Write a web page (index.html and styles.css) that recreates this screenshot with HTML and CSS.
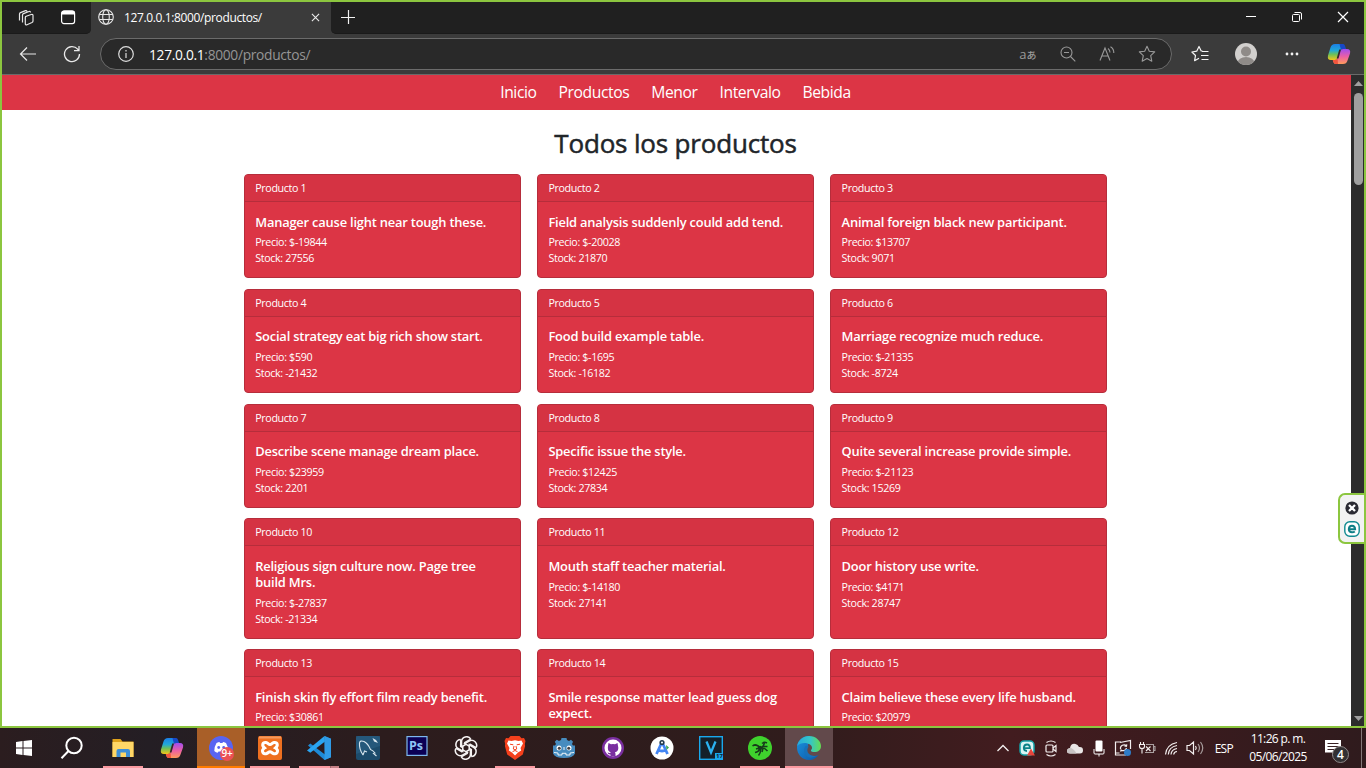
FILE: index.html
```html
<!DOCTYPE html>
<html lang="es">
<head>
<meta charset="utf-8">
<title>127.0.0.1:8000/productos/</title>
<link rel="stylesheet" href="styles.css">
</head>
<body>
<svg class="defs" width="0" height="0" aria-hidden="true">
  <defs>
    <linearGradient id="cpA" x1="0" y1="0" x2="0" y2="1"><stop offset="0" stop-color="#1b7fe8"/><stop offset=".4" stop-color="#21a8d8"/><stop offset=".65" stop-color="#6cbf5a"/><stop offset="1" stop-color="#f5c518"/></linearGradient>
    <linearGradient id="cpB" x1="0" y1="0" x2="0" y2="1"><stop offset="0" stop-color="#a04df0"/><stop offset=".5" stop-color="#ea5fa5"/><stop offset="1" stop-color="#ff9a5a"/></linearGradient>
    <symbol id="copilot" viewBox="0 0 24 24">
      <path d="M8 2h7q1.500 0 2 1.700L18.500 7H16q-2 0-2.600 2L11 15.500q-.7 2.500-3 2.500H4Q0 18 1 13.500L3.500 5.500Q4.500 2 8 2z" fill="url(#cpA)"/>
      <path d="M12.500 2h3.500q1.500 0 2 1.700L19 7h-3q-1.500 0-2 1z" fill="#1748c7"/>
      <path d="M16 22H8.500Q7 22 6.500 20.300L5.800 18H8q2 0 2.700-2L13 9.500q.7-2.500 3-2.500h4q4 0 3 4.500l-2.500 7Q19.500 22 16 22z" fill="url(#cpB)"/>
      <path d="M11 22H8.500Q7 22 6.500 20.300L5.800 18H8q2 0 2.600-1.500z" fill="#f2553d"/>
      <path d="M14 7.500h-1.800L9.700 16.500h1.800z" fill="#33262a"/>
    </symbol>
    <linearGradient id="edA" x1="0" y1="0" x2="1" y2="0"><stop offset="0" stop-color="#26a9dc"/><stop offset=".55" stop-color="#35c6c8"/><stop offset="1" stop-color="#65dc50"/></linearGradient>
    <linearGradient id="edB" x1="0" y1="0" x2="1" y2="1"><stop offset="0" stop-color="#1b93df"/><stop offset="1" stop-color="#0c58a8"/></linearGradient>
  </defs>
</svg>

<div class="window">
  <header class="tabbar">
    <div class="tab-tools">
      <svg class="ic18" viewBox="0 0 18 18" fill="none" stroke="#e6e6e6" stroke-width="1.2" stroke-linejoin="round"><path d="M8.500 7.500l5.700-2q1.800-.5 1.800 1v5.500q0 1-1 1.500l-5 2.200q-1.700.6-1.700-1V8.500q0-.8.700-1z"/><path d="M5.500 13.500V6q0-1 1-1.400l5.500-2.100q1.300-.4 1.500 1M2.500 11.500V5q0-1 1-1.400l5-2q1.300-.4 1.500 1"/></svg>
      <svg class="ic18" viewBox="0 0 18 18"><rect x="2.600" y="2.100" width="13" height="12.500" rx="2.300" fill="none" stroke="#fff" stroke-width="1.200"/><path d="M2.500 5.500V4.500q0-3 3-3h7.500q3 0 3 3v1z" fill="#fff"/></svg>
    </div>
    <div class="tab">
      <svg class="ic16" viewBox="0 0 16 16" fill="none" stroke="#e8e8e8" stroke-width="1.100"><circle cx="8" cy="8" r="7.300"/><ellipse cx="8" cy="8" rx="3.300" ry="7.300"/><path d="M1.200 5.500h13.600M1.200 10.500h13.600"/></svg>
      <span class="tab-title">127.0.0.1:8000/productos/</span>
      <svg class="tab-x" viewBox="0 0 10 10" stroke="#eee" stroke-width="1.200"><path d="M1 1l8 8M9 1l-8 8"/></svg>
    </div>
    <div class="tab-rest">
      <svg class="plus" viewBox="0 0 14 14" stroke="#f2f2f2" stroke-width="1.200"><path d="M7.500 0v14M0 7.500h14"/></svg>
      <div class="win-controls">
        <svg viewBox="0 0 12 12" stroke="#fff"><path d="M1 5.500h10"/></svg>
        <svg viewBox="0 0 12 12" fill="none" stroke="#fff"><rect x="1.500" y="3.500" width="7" height="7" rx="1"/><path d="M3.500 1.500h5.500q1.500 0 1.500 1.500v5.500"/></svg>
        <svg viewBox="0 0 12 12" stroke="#fff" stroke-width="1.200"><path d="M1 1l10 10M11 1L1 11"/></svg>
      </div>
    </div>
  </header>

  <div class="toolbar">
    <svg class="ic18 back" viewBox="0 0 18 18" fill="none" stroke="#e8e8e8" stroke-width="1.200"><path d="M17 9H1.500M8 2.500L1.500 9 8 15.500"/></svg>
    <svg class="ic18 reload" viewBox="0 0 18 18" fill="none" stroke="#e8e8e8" stroke-width="1.300"><path d="M16.500 9A7.500 7.500 0 1 1 14.700 4.200L16 5.500M16 1v4.700h-5"/></svg>
    <div class="address">
      <svg class="ic16" viewBox="0 0 16 16" fill="none" stroke="#ddd" stroke-width="1.200"><circle cx="8" cy="8" r="7.300"/><path d="M8 7v5M8 4v1.500"/></svg>
      <span class="url"><b>127.0.0.1</b>:8000/productos/</span>
      <div class="address-icons">
        <span class="translate">a<i>あ</i></span>
        <svg class="ic16" viewBox="0 0 16 16" fill="none" stroke="#999" stroke-width="1.100"><circle cx="6.500" cy="6.500" r="5.500"/><path d="M4 6.500h5M10.500 10.500l4.800 4.800"/></svg>
        <svg class="ic16" viewBox="0 0 16 16" fill="none" stroke="#999" stroke-width="1.100"><path d="M1 14.500L6 2l5 12.500M2.700 10h6.600M9 2.500q2 1.500 2 4M11.500.8q3.500 2.200 3.300 6.200"/></svg>
        <svg class="ic18" viewBox="0 0 18 18" fill="none" stroke="#999" stroke-width="1.100" stroke-linejoin="round"><path d="M9 1.300l2.300 5 5.400.6-4 3.700 1.100 5.600L9 13.500l-4.800 2.700 1.100-5.600-4-3.700 5.400-.6z"/></svg>
      </div>
    </div>
    <div class="right-icons">
      <svg class="ic18" viewBox="0 0 18 18" fill="none" stroke="#f5f5f5" stroke-width="1.200" stroke-linejoin="round"><path d="M11.500 6L10.200 6 8 1.500 5.700 6.200.9 7l3.600 3.500-.9 5.200L8 13.300"/><path d="M11 6.500h6.500M10 10.500h7.500M10.500 14.500h7"/></svg>
      <svg class="avatar" viewBox="0 0 22 22"><defs><clipPath id="avc"><circle cx="11" cy="11" r="11"/></clipPath></defs><circle cx="11" cy="11" r="11" fill="#d2d0ce"/><circle cx="11" cy="8.500" r="5" fill="#8f8b88"/><ellipse cx="11" cy="20" rx="8.500" ry="6" fill="#8f8b88" clip-path="url(#avc)"/></svg>
      <svg class="dots" viewBox="0 0 14 4" fill="#f2f2f2"><circle cx="2" cy="2" r="1.400"/><circle cx="7" cy="2" r="1.400"/><circle cx="12" cy="2" r="1.400"/></svg>
      <svg class="cp24"><use href="#copilot"/></svg>
    </div>
  </div>

  <div class="viewport">
    <main class="page">
      <nav class="nav"><a>Inicio</a><a>Productos</a><a>Menor</a><a>Intervalo</a><a>Bebida</a></nav>
      <h1 class="heading">Todos los productos</h1>
      <section class="grid">
        <article class="card"><div class="card-header">Producto 1</div><div class="card-body"><h5>Manager cause light near tough these.</h5><p>Precio: $-19844<br>Stock: 27556</p></div></article>
        <article class="card"><div class="card-header">Producto 2</div><div class="card-body"><h5>Field analysis suddenly could add tend.</h5><p>Precio: $-20028<br>Stock: 21870</p></div></article>
        <article class="card"><div class="card-header">Producto 3</div><div class="card-body"><h5>Animal foreign black new participant.</h5><p>Precio: $13707<br>Stock: 9071</p></div></article>
        <article class="card"><div class="card-header">Producto 4</div><div class="card-body"><h5>Social strategy eat big rich show start.</h5><p>Precio: $590<br>Stock: -21432</p></div></article>
        <article class="card"><div class="card-header">Producto 5</div><div class="card-body"><h5>Food build example table.</h5><p>Precio: $-1695<br>Stock: -16182</p></div></article>
        <article class="card"><div class="card-header">Producto 6</div><div class="card-body"><h5>Marriage recognize much reduce.</h5><p>Precio: $-21335<br>Stock: -8724</p></div></article>
        <article class="card"><div class="card-header">Producto 7</div><div class="card-body"><h5>Describe scene manage dream place.</h5><p>Precio: $23959<br>Stock: 2201</p></div></article>
        <article class="card"><div class="card-header">Producto 8</div><div class="card-body"><h5>Specific issue the style.</h5><p>Precio: $12425<br>Stock: 27834</p></div></article>
        <article class="card"><div class="card-header">Producto 9</div><div class="card-body"><h5>Quite several increase provide simple.</h5><p>Precio: $-21123<br>Stock: 15269</p></div></article>
        <article class="card"><div class="card-header">Producto 10</div><div class="card-body"><h5>Religious sign culture now. Page tree<br>build Mrs.</h5><p>Precio: $-27837<br>Stock: -21334</p></div></article>
        <article class="card"><div class="card-header">Producto 11</div><div class="card-body"><h5>Mouth staff teacher material.</h5><p>Precio: $-14180<br>Stock: 27141</p></div></article>
        <article class="card"><div class="card-header">Producto 12</div><div class="card-body"><h5>Door history use write.</h5><p>Precio: $4171<br>Stock: 28747</p></div></article>
        <article class="card"><div class="card-header">Producto 13</div><div class="card-body"><h5>Finish skin fly effort film ready benefit.</h5><p>Precio: $30861</p></div></article>
        <article class="card"><div class="card-header">Producto 14</div><div class="card-body"><h5>Smile response matter lead guess dog<br>expect.</h5></div></article>
        <article class="card"><div class="card-header">Producto 15</div><div class="card-body"><h5>Claim believe these every life husband.</h5><p>Precio: $20979</p></div></article>
      </section>
    </main>
    <div class="scrollbar">
      <svg class="arrow" viewBox="0 0 9 5"><path d="M0 5L4.500 0 9 5z" fill="#9f9f9f"/></svg>
      <div class="thumb"></div>
      <svg class="arrow down" viewBox="0 0 9 5"><path d="M0 0l4.500 5L9 0z" fill="#9f9f9f"/></svg>
    </div>
  </div>

  <div class="widget">
    <svg viewBox="0 0 14 14"><circle cx="7" cy="7" r="6.600" fill="#2b2b33"/><path d="M4 4l6 6M10 4l-6 6" stroke="#fff" stroke-width="2.300"/></svg>
    <svg class="eset" viewBox="0 0 16 16"><rect x=".8" y=".8" width="14.400" height="14.400" rx="5" fill="#fff" stroke="#0f8a90" stroke-width="1.400"/><path d="M4.800 8.300h6.300Q11 4.700 8 4.700T4.800 8.200Q5 11.300 8 11.300q1.900 0 2.800-.8" fill="none" stroke="#0f7f86" stroke-width="2"/></svg>
  </div>
</div>

<footer class="taskbar">
  <div class="apps">
    <div class="app start"><svg viewBox="0 0 24 24" fill="#fff"><path d="M4 6l6.500-.9v6.400H4zM11.500 5L20 4v7.500h-8.500zM4 12.500h6.500v6.400L4 18zM11.500 12.500H20V20l-8.500-1z"/></svg></div>
    <div class="app search"><svg viewBox="0 0 24 24" fill="none" stroke="#fff" stroke-width="2"><circle cx="14" cy="9.500" r="7.700"/><path d="M8.500 15L1.500 22.300"/></svg></div>
    <div class="app open"><svg viewBox="0 0 24 24"><path d="M1.500 3h8l2 2.500h11V21h-21z" fill="#dfa21b"/><path d="M1.500 6h21v15h-21z" fill="#ffd767"/><path d="M5.500 21v-6q0-2 2-2h9.500q2 0 2 2v6h-4v-4.500H9.500V21z" fill="#3d8fd8"/></svg></div>
    <div class="app"><svg><use href="#copilot"/></svg></div>
    <div class="app alert"><svg viewBox="0 0 24 24"><circle cx="12" cy="12" r="12" fill="#5865f2"/><path d="M7.500 7q2-1 3-1l.5 1h2.500l.5-1q1 0 3 1 2.200 3.500 2.200 8-1.700 1.500-3.300 1.700l-.8-1.300H9.500l-.8 1.300Q7 16.500 5.300 15 5.300 10.500 7.500 7z" fill="#fff"/><circle cx="9.700" cy="11.500" r="1.400" fill="#5865f2"/><circle cx="14.700" cy="11.500" r="1.400" fill="#5865f2"/></svg><span class="badge">9+</span></div>
    <div class="app open"><svg viewBox="0 0 24 24"><rect width="24" height="24" rx="2" fill="#ee7020"/><path d="M1 1.500h22" stroke="#f49a5e" stroke-width="2"/><path d="M8 6.500c-3.500-.5-4.500 3-1.500 5.500-3.500 2-2 6.500 1.500 5.700 2.200-.4 2.500-2 4-2s1.800 1.600 4 2c3.500.8 5-3.700 1.500-5.700 3-2.500 2-6-1.500-5.500-2 .3-2.300 2-4 2s-2-1.700-4-2z" fill="none" stroke="#fff" stroke-width="3"/></svg></div>
    <div class="app open split"><svg viewBox="0 0 24 24"><path d="M17.500 0L24 2.800v18.400L17.500 24 1 9.500l2.300-2L18 18.500z" fill="#1e8ad6"/><path d="M17.500 0L18 5.500 3.300 16.700 0 14.500z" fill="#2aa5f2"/><path d="M17.500 0L24 2.800v18.400L17.500 24z" fill="#2f9be6"/></svg></div>
    <div class="app"><svg viewBox="0 0 24 24"><rect width="24" height="24" rx="2" fill="#1c4b6b"/><path d="M0 0h24v10L0 18z" fill="#2b6185" opacity=".6"/><path d="M7 19q-4-6-3.500-12Q4 4 8 5.500q4 2 6.500 8 2.500 1 4.500 3.500l-1.500.5 3 2.500M7 19l1.500-4 2.500 1" fill="none" stroke="#d7e5ee" stroke-width="1.100"/><path d="M16.500 2l1.500 3.500L22 7l-2-3z" fill="#dce8f0"/></svg></div>
    <div class="app ps"><svg viewBox="0 0 24 24"><rect x="2" y=".6" width="20" height="18.800" fill="#0b0055" stroke="#7db8ee" stroke-width="1.200"/></svg><span class="ps-text">Ps</span></div>
    <div class="app"><svg viewBox="0.700 0.700 22.600 22.600" fill="none" stroke="#f4f2f2" stroke-width="1.450"><g id="petal"><path d="M12 8.500l-4.200 2.400V6.200a4.700 4.700 0 0 1 8.700-2.500M16.500 3.700l-6.200 3.500"/></g><use href="#petal" transform="rotate(60 12 12)"/><use href="#petal" transform="rotate(120 12 12)"/><use href="#petal" transform="rotate(180 12 12)"/><use href="#petal" transform="rotate(240 12 12)"/><use href="#petal" transform="rotate(300 12 12)"/></svg></div>
    <div class="app open"><svg viewBox="0 0 24 24"><path d="M7.500 0h9l2 2.300 2.500-.3 1.500 3-.7 3 .3 2-2.300 8.500L12 24l-7.800-5.500L1.900 10l.3-2-.7-3L3 2l2.500.3z" fill="#f5401c"/><path d="M5.500 4.500l3 .5L12 4.300l3.500.7 3-.5 1.500 3-2.500 4.500.7 2.500-3.200 2L12 19.500l-3-3-3.200-2 .7-2.500L4 7.500z" fill="#fff"/><path d="M7 8.200l3.300.6M17 8.200l-3.300.6M11 10l-.7 3 1.700.8 1.700-.8-.7-3M9.500 15.700l2.500-1.200 2.500 1.200" fill="none" stroke="#f5401c" stroke-width="1"/></svg></div>
    <div class="app"><svg viewBox="0 0 24 24"><path d="M9.500 2h5l.5 2 2 1 2-1.200 2 2L20 8l1 1.500h2v8Q21 22 12 22T1 17.500v-8h2L4 8 2.800 5.800l2-2L7 5l2-1z" fill="#478cbf"/><circle cx="7" cy="12" r="2.500" fill="#fff"/><circle cx="17" cy="12" r="2.500" fill="#fff"/><circle cx="7.300" cy="12.200" r="1.500" fill="#414042"/><circle cx="16.700" cy="12.200" r="1.500" fill="#414042"/><path d="M12 11v3M2 16.500l4 .5v2h4v-1.700h4V19h4v-2l4-.5" fill="none" stroke="#fff" stroke-width=".9"/></svg></div>
    <div class="app"><svg viewBox="0 0 24 24"><circle cx="12" cy="12" r="11" fill="#7a2fa0"/><circle cx="12" cy="12" r="8.500" fill="#fff"/><path d="M7.500 7l2.500 1.300q2-.6 4 0L16.500 7l.5 3q1.500 5-3 6.300.8 1 .5 4.200h-5v-2q-2.500.2-3-2l2 .5q.8.200 1.300-.7Q6 15.500 7 10z" fill="#7a2fa0"/></svg></div>
    <div class="app"><svg viewBox="0 0 24 24"><circle cx="12" cy="12" r="11.500" fill="#fff"/><path d="M12 6L6.500 18M12 6l5.500 12M7.500 13.500q4.500 3 9 0" fill="none" stroke="#4285f4" stroke-width="2.800"/><circle cx="12" cy="6.500" r="2.600" fill="#20394d"/><circle cx="12" cy="6.500" r="1" fill="#fff"/><path d="M16 9l3 2.500-2.500 2.500z" fill="#39a852"/></svg></div>
    <div class="app vegas"><svg viewBox="0 0 24 24"><rect x=".7" y=".7" width="22.600" height="22.600" fill="#142029" stroke="#19a8ed" stroke-width="1.400"/><path d="M16 17h7v6h-7z" fill="#19a8ed"/><path d="M7.500 5.500l4.500 11 4.500-11" fill="none" stroke="#2bb2f0" stroke-width="2.300"/></svg><span class="vegas-text">17</span></div>
    <div class="app open"><svg viewBox="0 0 24 24"><circle cx="12" cy="12" r="12" fill="#3fd22d"/><g fill="none" stroke="#173a1b" stroke-width="1.500"><path d="M4.500 10q4-3 7.500 2 4-1 4.500-6M6.500 9q3-.5 5.500 3M19 7q-3-1.500-5 .5M19.500 10.500h-4M12 12q4-1 7.500 3M15 12.500l-1 3.500M12 12q-1 4-5 4.500M12 12q1.500 4-1.500 7.500M8 13l3-1"/></g><circle cx="12" cy="12" r="2.200" fill="#173a1b"/></svg></div>
    <div class="app active"><svg viewBox="0 0 24 24"><path d="M12 0C5 0 0 5.500 0 11.500 0 18.500 5.500 24 12 24q6 0 9.500-5Q17 21 13 19c-4-2-4.500-6-2-8.500L12 0z" fill="url(#edB)"/><path d="M.2 10C1 4.500 6 0 12 0c7 0 12 5 12 10 0 4-3 6-6.500 6-4 0-4-1.700-3-2.500 1-1.300.7-3.500-1.500-5C9.500 6 3 6.500.2 10z" fill="url(#edA)"/><path d="M8.500 10Q5 15 9.500 20q4 3.500 11-.5Q15 21 12 18t-.5-7.500Q11.500 9.500 8.500 10z" fill="#1671ba"/></svg></div>
  </div>
  <div class="tray">
    <svg viewBox="0 0 24 24" fill="none" stroke="#f3efef" stroke-width="1.300"><path d="M6.500 15l5.500-5.500 5.500 5.500"/></svg>
    <svg viewBox="0 0 24 24"><rect x="5" y="5" width="14" height="14" rx="4" fill="#d9f4f4" stroke="#13a0a6" stroke-width="1.500"/><path d="M8.500 12.200h6.500q0-3.700-3-3.700t-3.200 3.500q.2 3 3.200 3" fill="none" stroke="#0b8288" stroke-width="1.800"/><path d="M16 12.500l4 7h-8z" fill="#e7463d"/></svg>
    <svg viewBox="0 0 24 24" fill="none" stroke="#f3efef" stroke-width="1.200"><rect x="7" y="9" width="7" height="7" rx="1"/><path d="M14 12l3-2.500v6L14 13M7.500 6.500Q12 3.500 16.500 6.500M7.500 18.500q4.500 3 9 0"/></svg>
    <svg viewBox="0 0 24 24"><path d="M7 17.500q-3 0-3-2.500t3-3q1-5 5.500-4 2.300.4 3.500 3 4-.4 4 3.200 0 3.300-3 3.300z" fill="#e9e6e6"/><path d="M4 15q0-2.500 3-3 3.500 0 6.500 5.500H7q-3 0-3-2.500z" fill="#c7c3c3"/></svg>
    <svg viewBox="0 0 24 24"><rect x="8.500" y="4.500" width="7" height="11" rx="1" fill="#fff"/><path d="M7 13v4q0 1 1 1h8q1 0 1-1v-4M12 18v2.500" fill="none" stroke="#fff"/></svg>
    <svg viewBox="0 0 24 24" fill="none" stroke="#f3efef" stroke-width="1.200"><path d="M10 6H4.500v13H15M4.500 17h4M9 6.500l10.500-2V13M9.500 13a3.500 3.500 0 0 1 6-3l.3-1.700M15.800 10l-2.300.2M15.500 12a3.500 3.500 0 0 1-5.500 2l-.3 1.700"/><circle cx="16.500" cy="16.500" r="3.500" fill="#2f7cc7" stroke="none"/></svg>
    <svg viewBox="0 0 24 24" fill="none" stroke="#f3efef" stroke-width="1.100"><path d="M5.500 6v2.500M8.500 6v2.500M4.500 8.500h5v2q0 2-2.500 2t-2.500-2zM7 12.500v5"/><path d="M11 8.500h7.500v8H10M18.500 10.500h1.500v4h-1.500" stroke="#aaa0a0"/><path d="M11 10.500l4.500 4.500M15.500 10.500L11 15"/></svg>
    <svg viewBox="0 0 24 24" fill="none" stroke="#f3efef" stroke-width="1.200"><path d="M6.500 18.500q1-10 11.500-12"/><path d="M9.300 18.500q.5-7.500 8.700-9M12 18.500q.3-5 6-6M14.700 18.500q.3-2.700 3.300-3"/></svg>
    <svg viewBox="0 0 24 24" fill="none" stroke="#f3efef" stroke-width="1.200"><path d="M4 9.500h2.500l4-3.500v12l-4-3.500H4zM12.500 10q1.500 2 0 4"/><path d="M15 8q3 4 0 8M17.500 6q4.500 6 0 12" stroke="#a89d9d"/></svg>
    <span class="lang">ESP</span>
    <div class="clock"><span>11:26 p. m.</span><span>05/06/2025</span></div>
    <div class="notif"><svg viewBox="0 0 24 24"><path d="M1 3h16v12.500h-4.500L8.500 19v-3.500H1z" fill="#fff"/><path d="M3.500 6.500h11M3.500 9.500h11M3.500 12.500h8" stroke="#3a2224"/></svg><span class="count">4</span></div>
  </div>
</footer>
</body>
</html>
```
FILE: styles.css
```css
* { box-sizing: border-box; }
body {
  margin: 0;
  width: 1366px;
  height: 768px;
  overflow: hidden;
  display: flex;
  flex-direction: column;
  font-family: "Open Sans", "Noto Sans", sans-serif;
  background: #fff;
}
svg { display: block; flex: none; }
.defs { position: absolute; }
.ic18 { width: 18px; height: 18px; }
.ic16 { width: 16px; height: 16px; }

.window {
  position: relative;
  height: 728px;
  border: 2px solid #8cc63f;
  display: flex;
  flex-direction: column;
}

/* Tab strip */
.tabbar { display: flex; height: 32px; background: #3b3b3b; }
.tab-tools {
  width: 89px;
  display: flex;
  align-items: center;
  padding-left: 15px;
  gap: 24px;
  background: #202020;
  border-radius: 0 0 5px 0;
  border-bottom: 1px solid #1a1a1a;
}
.tab { width: 240px; display: flex; align-items: center; padding: 0 11px 2px 7px; }
.tab-title {
  flex: 1;
  margin-left: 10px;
  font-size: 12px;
  letter-spacing: -.37px;
  color: #fff;
  white-space: nowrap;
}
.tab-x { width: 9px; height: 9px; }
.tab-rest {
  flex: 1;
  display: flex;
  align-items: center;
  justify-content: space-between;
  padding: 0 15px 2px 10px;
  background: #202020;
  border-radius: 0 0 0 5px;
  border-bottom: 1px solid #1a1a1a;
}
.plus { width: 14px; height: 14px; }
.win-controls { display: flex; gap: 34px; }
.win-controls svg { width: 12px; height: 12px; }

/* Toolbar */
.toolbar {
  display: flex;
  align-items: center;
  height: 41px;
  background: #3b3b3b;
  border-bottom: 1px solid #6a6a6a;
}
.back { margin-left: 17px; }
.reload { margin-left: 26px; }
.address {
  display: flex;
  align-items: center;
  width: 1072px;
  height: 32px;
  margin-left: 19px;
  padding: 0 15px 0 17px;
  background: #292929;
  border: 1px solid #6b6b6b;
  border-radius: 16px;
}
.url { margin-left: 15px; font-size: 13.800px; letter-spacing: -.32px; color: #959595; }
.url b { font-weight: 400; color: #fff; }
.address-icons { margin-left: auto; display: flex; align-items: center; gap: 23px; }
.translate {
  margin-right: 1px;
  font: 13px/18px "Open Sans", "Noto Sans CJK JP", sans-serif;
  color: #999;
  white-space: nowrap;
}
.translate i { font-style: normal; font-weight: 500; font-size: 10px; letter-spacing: -.5px; }
.right-icons { display: flex; align-items: center; margin-left: 19px; }
.avatar { width: 22px; height: 22px; margin-left: 26px; }
.dots { width: 14px; height: 4px; margin-left: 28px; }
.cp24 { width: 24px; height: 24px; margin-left: 28px; }

/* Page */
.viewport { flex: 1; min-height: 0; display: flex; }
.page { width: 1349px; overflow: hidden; background: #fff; }
.nav {
  display: flex;
  justify-content: center;
  gap: 21.900px;
  height: 35px;
  padding-right: 2px;
  line-height: 35px;
  font-size: 15.700px;
  letter-spacing: -.41px;
  background: #dc3545;
  color: #fff;
}
.heading {
  margin: 15px 0 0;
  padding-right: 2px;
  height: 36px;
  line-height: 36px;
  text-align: center;
  font-size: 26px;
  letter-spacing: -.18px;
  font-weight: 500;
  -webkit-text-stroke: .5px #212529;
  color: #212529;
}
.grid {
  display: grid;
  grid-template-columns: repeat(3, 277px);
  justify-content: center;
  column-gap: 16.200px;
  row-gap: 10.700px;
  margin-top: 13px;
  padding-right: 2px;
}
.card {
  border: 1px solid #b62d3b;
  border-radius: 4px;
  background: #dc3545;
  color: #fff;
  font-size: 10.700px;
  letter-spacing: -.34px;
  line-height: 16.080px;
  overflow: hidden;
}
.card-header {
  height: 27px;
  padding: 5px 10.400px 0;
  background: #d53343;
  border-bottom: 1px solid #b62d3b;
}
.card-body { padding: 11.500px 10.400px 10.900px; }
.card-body h5 {
  margin: 0 0 4.500px;
  font-size: 12.900px;
  letter-spacing: -.2px;
  line-height: 16.080px;
  font-weight: 600;
  white-space: nowrap;
}
.card-body p { margin: 0; }

.scrollbar {
  width: 13px;
  background: #2c2c2c;
  display: flex;
  flex-direction: column;
  align-items: center;
  padding: 6px 0 5px 1px;
}
.arrow { width: 9px; height: 5px; }
.thumb { width: 9px; height: 92px; margin-top: 7px; border-radius: 5px; background: #9f9f9f; }
.down { margin-top: auto; }

.widget {
  position: absolute;
  right: 0;
  top: 491px;
  width: 26px;
  height: 51px;
  border: 2px solid #8cc63f;
  border-right: 0;
  border-radius: 7px 0 0 7px;
  background: #f2f2f2;
  display: flex;
  flex-direction: column;
  align-items: center;
  gap: 6px;
  padding-top: 6px;
}
.widget svg { width: 14px; height: 14px; }
.widget .eset { width: 16px; height: 16px; }

/* Taskbar */
.taskbar {
  height: 40px;
  display: flex;
  justify-content: space-between;
  background: linear-gradient(90deg, #2b1d1f 0, #241e24 150px, #2c1c1d 380px, #301c1c 800px, #421c1f 1010px, #3a1b1e 1180px, #2f1b1d 1366px);
}
.apps { display: flex; gap: 1px; }
.app { position: relative; width: 48px; height: 40px; display: flex; justify-content: center; padding-top: 8px; }
.app svg { width: 24px; height: 24px; }
.start { margin-right: -1px; }
.search { margin-right: 2px; }
.open::after, .active::after, .alert::after {
  content: "";
  position: absolute;
  bottom: 0;
  left: 4px;
  width: 40px;
  height: 2px;
  background: #fa99a0;
}
.split::after { background: linear-gradient(90deg, #fa99a0 31px, #9b686c 31px, #9b686c 32px, #c58086 32px); }
.alert { background: #a95f28; }
.alert::after { left: 0; width: 48px; background: #ff7b00; }
.active { background: #62494b; }
.active::after { left: 0; width: 48px; }
.badge {
  position: absolute;
  left: 23px;
  top: 19px;
  width: 14px;
  height: 14px;
  border-radius: 7px;
  background: #ec5054;
  color: #fff;
  font-size: 10px;
  font-weight: 600;
  letter-spacing: -.3px;
  line-height: 13px;
  text-align: center;
}
.ps-text { position: absolute; left: 16px; top: 9px; font-size: 12.500px; line-height: 17px; font-weight: 700; letter-spacing: -.2px; color: #8ec5f5; }
.vegas-text { position: absolute; left: 29px; top: 24px; font-size: 6px; line-height: 8px; font-weight: 700; color: #10202b; }

.tray { display: flex; align-items: center; color: #fff; padding-right: 4px; }
.tray > svg { width: 24px; height: 24px; }
.lang { margin-left: 8px; font-size: 12px; letter-spacing: -.7px; }
.clock {
  width: 62px;
  margin-left: 14px;
  display: flex;
  flex-direction: column;
  align-items: center;
  font-size: 12px;
  line-height: 18px;
  letter-spacing: -.63px;
  white-space: nowrap;
}
.notif { position: relative; width: 39px; height: 40px; margin-left: 14px; padding: 9px 0 0 1px; border-right: 1px solid #847879; }
.notif svg { width: 24px; height: 24px; }
.count {
  position: absolute;
  left: 9px;
  top: 18px;
  width: 17px;
  height: 17px;
  border: 1px solid #8f8888;
  border-radius: 9px;
  background: #333032;
  font-size: 12px;
  font-weight: 600;
  line-height: 15px;
  text-align: center;
}
```
